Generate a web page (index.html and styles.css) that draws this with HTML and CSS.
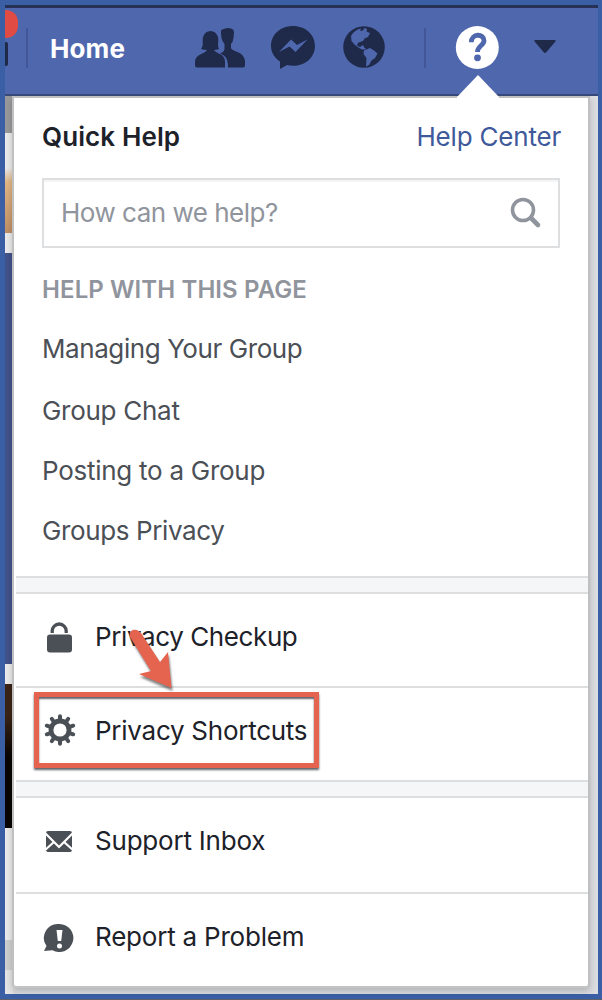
FILE: index.html
```html
<!DOCTYPE html>
<html lang="en">
<head>
<meta charset="utf-8">
<title>Quick Help</title>
<link rel="stylesheet" href="styles.css">
</head>
<body>
<div class="frame">
  <header class="topbar">
    <span class="badge"></span>
    <span class="edge-icon"></span>
    <span class="divider"></span>
    <a class="home">Home</a>
    <svg class="friends" width="50" height="40" viewBox="0 0 50 40" fill="#1f2a4b">
      <path d="M26 5Q25.500 1 29 1Q32-.5 36 .5Q39 1 39 5L38.500 10Q38 14 36 16V20C37 24 49 23 50 33V37.500Q50 39.500 48 39.500H33C33 31 31 28 25 25.500C29 24 29.500 22 29.500 20V16Q27 13 26.500 10Z"/>
      <path d="M6 21C9 17 7 14 8 9Q10 3 15.500 3Q21 3 23 9C24 14 22 17 24 21Q21 22 19 22C21 26 30 25 30 34V39.500H2Q0 39.500 0 37.500V34C0 26 10 26 12 22Q9 22 6 21Z"/>
    </svg>
    <svg class="messenger" width="44" height="44" viewBox="0 0 44 44">
      <path fill="#1f2a4b" d="M22 0C9.500 0 0 8.500 0 20c0 6 3 11.500 9 15.500V43l7-4c2 .6 4 .8 6 .8 12.500 0 22-8.500 22-19.800S34.500 0 22 0Z"/>
      <path fill="#4f67ad" d="M8 26 20 13.500l6 5.500 10.500-5.500L24.500 26l-6-5.500Z"/>
    </svg>
    <svg class="globe" width="42" height="42" viewBox="0 0 42 42">
      <circle cx="21" cy="21" r="20.800" fill="#1f2a4b"/>
      <path fill="#4f67ad" d="M8 10Q11 4 18 2.500L17 5l3-.5L21.500 2 24 3l-.5 2.500L27 7l-2 4-3.500 1.500L20 15l-5 1.700L14 19.500l3 1.500 3-2 1.500 3 2 1-3.500.7-3-1.200L12 19 8.500 15ZM21 24.500 27 22l4 2.500 3.500 3L32 32l-3.500 2.500L26 39l-3 1.500L23.500 32 20.500 28Z"/>
    </svg>
    <span class="divider divider-right"></span>
    <span class="help">
      <svg width="44" height="44" viewBox="0 0 44 44">
        <circle cx="22.300" cy="21.500" r="21.500" fill="#fff"/>
        <path d="M16.300 16.200C16.300 7.200 29 7.200 29 14.700C29 19.500 22.500 19.800 22.500 26" fill="none" stroke="#4f67ad" stroke-width="4.800"/>
        <circle cx="22.500" cy="31.800" r="3.400" fill="#4f67ad"/>
      </svg>
      <svg class="pointer" width="42" height="24" viewBox="0 0 42 24"><path d="M0 22 21 0 42 22V24H0Z" fill="#fff"/></svg>
    </span>
    <svg class="caret" width="22" height="14" viewBox="0 0 22 14"><path d="M1 0H21Q22.500.5 21 2L12.500 12Q11 14 9.500 12L1 2Q-.5.5 1 0Z" fill="#1f2a4b"/></svg>
  </header>
  <main class="page">
    <section class="menu">
      <div class="quick">
        <div class="title-row">
          <h1 class="title">Quick Help</h1>
          <a class="center">Help Center</a>
        </div>
        <div class="search">
          <span class="placeholder">How can we help?</span>
          <svg class="magnifier" width="32" height="32" viewBox="0 0 32 32" fill="none" stroke="#90949c"><circle cx="13" cy="13" r="10.500" stroke-width="3.600"/><path d="m21 21 7 7" stroke-width="4.600" stroke-linecap="round"/></svg>
        </div>
        <h2 class="subhead">HELP WITH THIS PAGE</h2>
        <ul class="links">
          <li class="managing">Managing Your Group</li>
          <li class="chat">Group Chat</li>
          <li class="posting">Posting to a Group</li>
          <li class="privacy">Groups Privacy</li>
        </ul>
      </div>
      <div class="band"></div>
      <div class="item first">
        <svg width="34" height="34" viewBox="0 0 34 34"><path d="M10.200 14V12a7 7 0 0 1 14 0V14" fill="none" stroke="#4b4f56" stroke-width="3.300"/><rect x="5" y="15.500" width="25" height="18" rx="3" fill="#4b4f56"/></svg>
        <span class="checkup">Privacy Checkup</span>
        <svg class="arrow" width="48" height="66" viewBox="0 0 48 66"><path d="M2 9C0 2 8-1 13 5L32 34 40 24 43.500 60 11 46 23 43Z" fill="#e4644f"/></svg>
      </div>
      <div class="item second">
        <svg width="34" height="34" viewBox="0 0 34 34"><g stroke="#4b4f56" fill="none" transform="translate(1 -1)"><circle cx="17" cy="17" r="9" stroke-width="4.800"/><g stroke-width="4" stroke-linecap="round"><path d="M17 3.200v3M25.200 5.800l-1.800 2.500M30.200 12.700l-3 1M30.200 21.300l-3-1M25.200 28.200l-1.800-2.500M17 30.800v-3M8.800 28.200l1.800-2.500M3.800 21.300l3-1M3.800 12.700l3 1M8.800 5.800l1.800 2.500"/></g></g></svg>
        <span class="shortcuts">Privacy Shortcuts</span>
        <span class="highlight"></span>
      </div>
      <div class="band"></div>
      <div class="item tall">
        <svg width="34" height="34" viewBox="0 0 34 34"><rect x="4" y="7" width="26" height="21" rx="2" fill="#4b4f56"/><path d="m3 9 14 14L31 9M3 26l9-8M31 26l-9-8" fill="none" stroke="#fff" stroke-width="2.200"/></svg>
        <span class="support">Support Inbox</span>
      </div>
      <div class="item last">
        <svg width="34" height="34" viewBox="0 0 34 34"><path d="M17.500 5a14 14 0 1 1-7 26.200L2 32 4.500 27A14 14 0 0 1 17.500 5Z" fill="#4b4f56"/><path d="M14.500 11h6l-1.300 11h-3.400Z" fill="#fff"/><circle cx="17.500" cy="27" r="2.500" fill="#fff"/></svg>
        <span class="report">Report a Problem</span>
      </div>
    </section>
  </main>
</div>
</body>
</html>
```
FILE: styles.css
```css
* { box-sizing: border-box; }
body { margin: 0; font-family: Inter, "Liberation Sans", sans-serif; font-size: 26px; color: #1d2129; }
.frame { width: 602px; height: 1000px; padding: 5px 4px 5px 5px; background: #3a5fa5; border-bottom: 1px solid #5b6069; overflow: hidden; }
.topbar { position: relative; height: 91px; display: flex; align-items: flex-start; background: #4f67ad; border-top: 3px solid #263155; border-bottom: 2px solid #37487b; }
.badge { position: absolute; left: 0; top: 2px; width: 13px; height: 28px; border-radius: 0 12px 12px 0; background: #e04c43; }
.edge-icon { position: absolute; left: 0; top: 34px; width: 3px; height: 24px; background: #1f2a4b; border-radius: 0 2px 2px 0; }
.divider { flex: none; width: 2px; height: 40px; margin: 20px 0 0 21px; background: #435798; }
.home { flex: none; width: 145px; padding-left: 22px; margin-top: 25px; line-height: 32px; color: #fff; font-weight: 700; letter-spacing: .1px; }
.friends { flex: none; margin: 20px 0 0 22px; }
.messenger { flex: none; margin: 18px 0 0 26px; }
.globe { flex: none; margin: 18px 0 0 28px; }
.divider-right { margin-left: 39px; }
.help { position: relative; flex: none; width: 44px; height: 44px; margin: 18px 0 0 29px; }
.help svg { display: block; }
.help .pointer { position: absolute; left: 2px; top: 49px; z-index: 2; }
.caret { flex: none; margin: 32px 0 0 35px; }
.page { height: 898px; padding: 0 8px 6px 7px; background:
  linear-gradient(#99999b 0 37px, #ebebeb 37px 72px, #e2b785 86px, #bf8f65 137px, #ebebeb 137px 157px, #42528b 157px 568px, #ebebeb 568px 588px, #3b2416 588px 620px, #090503 660px, #090503 732px, #ebebeb 732px 844px, #cfcfd0 844px 874px, #e5e5e5 874px) 0 0 / 8px 100% no-repeat, #dcdde0; }
.menu { height: 892px; background: #fff; border: 2px solid #c0c0c1; border-bottom-color: #c4c4c5; border-radius: 0 0 4px 4px; box-shadow: 0 3px 7px rgba(0,0,0,.2); }
.quick { height: 478px; padding: 21px 28px 0; }
.title-row { display: flex; justify-content: space-between; line-height: 36px; }
.title { margin: 0; font-size: 26px; font-weight: 600; letter-spacing: .1px; }
.center { margin-right: -1px; color: #40599a; letter-spacing: -.2px; }
.search { display: flex; align-items: center; justify-content: space-between; height: 70px; margin-top: 23px; padding: 0 16px 2px 17px; border: 2px solid #dddfe0; color: #90949c; box-shadow: inset 0 2px #f5f5f6; }
.placeholder { letter-spacing: -.5px; }
.magnifier { margin-top: 2px; }
.subhead { margin: 26px 0 0; font-size: 24px; font-weight: 600; line-height: 32px; color: #90949c; letter-spacing: .1px; }
.links { margin: 13px 0 0; padding: 0; list-style: none; line-height: 60px; color: #4b4f56; }
.managing { height: 62px; letter-spacing: -.42px; }
.chat { letter-spacing: -.28px; }
.posting { letter-spacing: -.27px; }
.privacy { letter-spacing: -.38px; }
.checkup { letter-spacing: -.4px; }
.shortcuts { letter-spacing: -.26px; }
.support, .report { letter-spacing: -.21px; }
.band { height: 18px; margin-left: 2px; border: solid #dddee0; border-width: 2px 0; background: #f5f6f8; }
.item { position: relative; display: flex; align-items: center; gap: 19px; height: 94px; padding: 0 0 8px 26px; margin-left: 2px; }
.item svg { flex: none; }
.first { border-bottom: 2px solid #dddee0; z-index: 1; }
.second { height: 92px; padding-bottom: 7px; }
.tall { height: 96px; padding-bottom: 9px; border-bottom: 2px solid #dddee0; }
.last { height: 92px; padding-bottom: 8px; }
.item .arrow { position: absolute; left: 112px; top: 34px; filter: drop-shadow(1px 3px 1px rgba(50,50,50,.6)); }
.highlight { position: absolute; left: 18px; top: 4px; width: 285px; height: 76px; border: 5px solid #e4644f; box-shadow: 0 2px 2px #62636a, inset 0 2px 2px #62636a; }
```
